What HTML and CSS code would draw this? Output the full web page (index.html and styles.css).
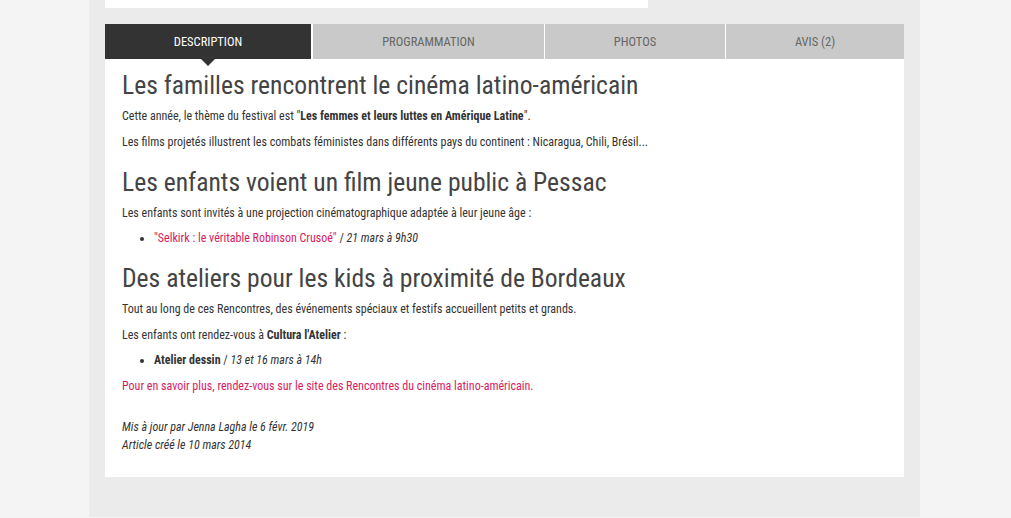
FILE: index.html
```html
<!DOCTYPE html>
<html lang="fr">
<head>
    <meta charset="UTF-8">
    <meta name="viewport" content="width=device-width, initial-scale=1.0">
    <title>Rencontres du cinéma latino-américain</title>
    <link rel="stylesheet" href="styles.css">
</head>
<body>
    <div class="page">
        <div class="topBox"></div>
        <ul class="tabs">
            <li class="tab tabDesc active">Description</li>
            <li class="tab tabProg">Programmation</li>
            <li class="tab tabPhotos">Photos</li>
            <li class="tab tabAvis">Avis (2)</li>
        </ul>
        <div class="content">
            <h2>Les familles rencontrent le cinéma latino-américain</h2>
            <p>Cette année, le thème du festival est "<strong>Les femmes et leurs luttes en Amérique Latine</strong>".</p>
            <p>Les films projetés illustrent les combats féministes dans différents pays du continent : Nicaragua, Chili, Brésil...</p>

            <h2>Les enfants voient un film jeune public à Pessac</h2>
            <p>Les enfants sont invités à une projection cinématographique adaptée à leur jeune âge :</p>
            <ul class="events">
                <li><a href="#">"Selkirk : le véritable Robinson Crusoé"</a> / <em>21 mars à 9h30</em></li>
            </ul>

            <h2>Des ateliers pour les kids à proximité de Bordeaux</h2>
            <p>Tout au long de ces Rencontres, des événements spéciaux et festifs accueillent petits et grands.</p>
            <p>Les enfants ont rendez-vous à <strong>Cultura l'Atelier</strong> :</p>
            <ul class="events">
                <li><strong>Atelier dessin</strong> / <em>13 et 16 mars à 14h</em></li>
            </ul>
            <p><a href="#">Pour en savoir plus, rendez-vous sur le site des Rencontres du cinéma latino-américain.</a></p>

            <div class="meta">
                <em>Mis à jour par Jenna Lagha le 6 févr. 2019</em><br>
                <em>Article créé le 10 mars 2014</em>
            </div>
        </div>
    </div>
</body>
</html>
```
FILE: styles.css
```css
body {
    margin: 0;
    background-color: #f4f4f4;
    font-family: Roboto, "Open Sans", sans-serif;
    font-stretch: 75%;
    color: #333;
}
.page {
    width: 799px;
    margin: 0 0 0 89px;
    padding: 0 16px 40px;
    background-color: #ebebeb;
}
.topBox {
    width: 543px;
    height: 8px;
    background-color: #fff;
}
.tabs {
    display: flex;
    margin: 16px 0 0;
    padding: 0;
    list-style: none;
}
.tab {
    position: relative;
    height: 34px;
    padding-top: 1px;
    line-height: 34px;
    text-align: center;
    font-size: 12.5px;
    text-transform: uppercase;
    color: #666;
    background-color: #c9c9c9;
    border-left: 1px solid #fff;
    cursor: pointer;
}
.tabDesc {
    width: 206px;
    border-left: none;
}
.tabProg {
    width: 231px;
    border-left-width: 2px;
}
.tabPhotos {
    width: 180px;
}
.tabAvis {
    flex: 1;
}
.tab.active {
    color: #fff;
    background-color: #333;
}
.tab.active:after {
    content: "";
    position: absolute;
    left: 50%;
    bottom: -7px;
    margin-left: -7px;
    border-left: 7px solid transparent;
    border-right: 7px solid transparent;
    border-top: 7px solid #333;
}
.content {
    background-color: #fff;
    padding: 11px 17px 23px;
    font-size: 12px;
    line-height: 18px;
}
.content h2 {
    margin: 16px 0 7px;
    font-size: 25.6px;
    line-height: 30px;
    font-weight: 400;
    color: #444;
}
.content h2:first-child {
    margin-top: 0;
}
.content p {
    margin: 0 0 7.5px;
}
.content a {
    color: #d81b60;
    text-decoration: none;
}
.content strong {
    font-weight: 700;
}
.events {
    margin: 0 0 7.5px;
    padding-left: 32px;
}
.meta {
    margin-top: 23px;
}
```
